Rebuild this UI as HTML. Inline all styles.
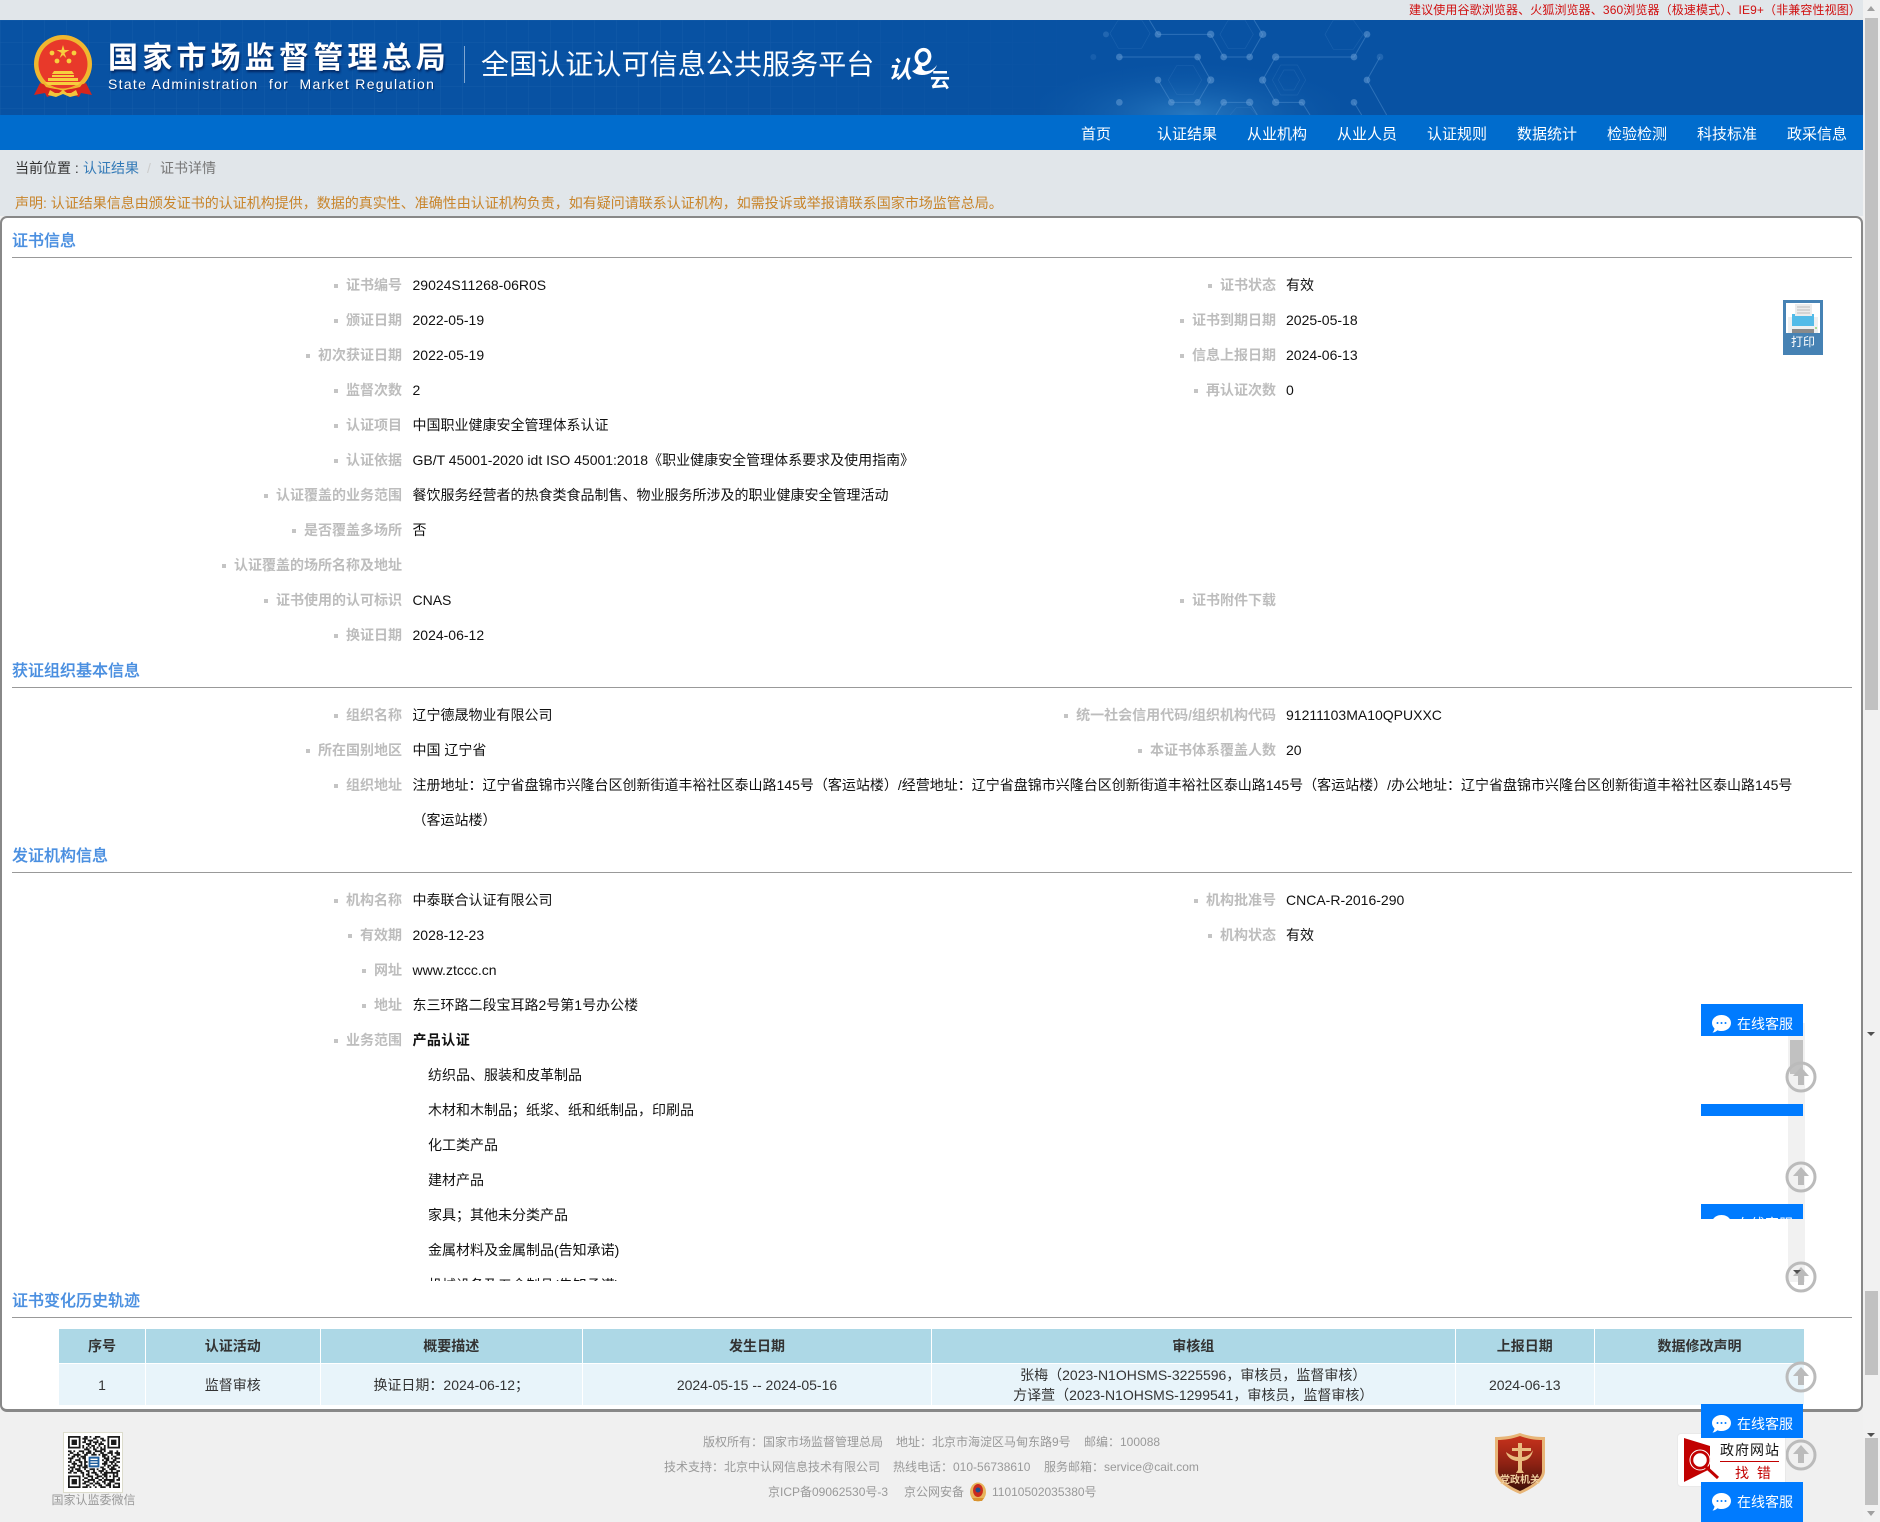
<!DOCTYPE html>
<html lang="zh-CN">
<head>
<meta charset="utf-8">
<title>证书详情</title>
<style>
html,body{margin:0;padding:0;width:1880px;height:1522px;overflow:hidden;background:#f0f0f0;font-family:"Liberation Sans","Noto Sans CJK SC",sans-serif;font-size:14px;color:#222}
div,span,svg{box-sizing:border-box}
.a{position:absolute;white-space:pre}
#top{position:absolute;left:0;top:0;width:1863px;height:216px;background:#e1e6ea}
#hd{position:absolute;left:0;top:20px;width:1863px;height:95px;background:#0852a3;overflow:hidden}
#nav{position:absolute;left:0;top:115px;width:1863px;height:35px;background:#006ccd}
.n{position:absolute;top:125px;line-height:20px;font-size:15px;color:#fff;white-space:pre}
#box{position:absolute;left:0;top:216px;width:1863px;height:1196px;background:#fff;border:2px solid #888;border-bottom-width:3px;border-radius:7px}
.t{position:absolute;left:12px;font-size:16px;line-height:22px;color:#4a8fe0;font-weight:500;-webkit-text-stroke:.2px #4a8fe0;white-space:pre}
.hr{position:absolute;left:12px;width:1840px;height:1px;background:#999}
#clip{position:absolute;left:0;top:0;width:1880px;height:1281px;overflow:hidden}
.r{position:absolute;height:20px;line-height:20px;white-space:pre}
.l{position:absolute;text-align:right;color:#bdbdbd;font-weight:bold;height:20px;line-height:20px;white-space:pre}
.l:before{content:"";display:inline-block;width:4px;height:4px;background:#c4c4c4;margin-right:8px;vertical-align:2px}
.v{position:absolute;color:#111;height:20px;line-height:20px;white-space:pre}
table{position:absolute;left:59px;top:1329px;width:1745px;height:75px;border-collapse:collapse;table-layout:fixed}
th{background:#add8e6;height:34px;border:1px solid #fff;border-top:0;font-size:14px;color:#333;padding:0;line-height:20px}
td{background:#e8f4fa;height:41px;border:1px solid #fff;border-bottom:0;text-align:center;color:#333;padding:0;line-height:20px;font-size:14px}
th:first-child,td:first-child{border-left:0}
th:last-child,td:last-child{border-right:0}
.sb{position:absolute;left:1863px;width:17px;background:#f1f1f1}
.th{position:absolute;left:1865px;width:13px;background:#c1c1c1}
.tr{position:absolute;width:0;height:0;border-left:4px solid transparent;border-right:4px solid transparent}
.btn{position:absolute;left:1701px;width:102px;background:#007bff;overflow:hidden}
.btn span{position:absolute;left:36px;color:#fff;font-size:14px;line-height:20px;white-space:pre}
.btn svg{position:absolute;left:11px}
.ci{position:absolute;width:32px;height:32px}
.f{position:absolute;font-size:12px;line-height:18px;color:#999;white-space:pre}
</style>
</head>
<body>
<div id="top"></div>
<div class="a" style="left:1409px;top:1px;font-size:12px;line-height:18px;color:#d01010;letter-spacing:.12px">建议使用谷歌浏览器、火狐浏览器、360浏览器（极速模式）、IE9+（非兼容性视图）</div>

<div id="hd">
<svg style="position:absolute;left:0;top:0" width="1863" height="95">
<defs>
<pattern id="g" width="22" height="22" patternUnits="userSpaceOnUse"><path d="M22 0H0V22" fill="none" stroke="#2a6cb5" stroke-width="1" opacity=".4"/></pattern>
<radialGradient id="gl" cx="50%" cy="100%" r="60%"><stop offset="0" stop-color="#2f82c8" stop-opacity=".8"/><stop offset="1" stop-color="#0852a3" stop-opacity="0"/></radialGradient>
<linearGradient id="fd" x1="0" x2="1"><stop offset="0" stop-color="#fff"/><stop offset=".62" stop-color="#fff"/><stop offset="1" stop-color="#000"/></linearGradient>
<mask id="m"><rect width="1125" height="95" fill="url(#fd)"/></mask>
</defs>
<rect width="1125" height="95" fill="url(#g)" mask="url(#m)"/>
<rect x="1040" y="0" width="300" height="95" fill="url(#gl)"/>
</svg>
<svg style="position:absolute;left:1060px;top:0" width="400" height="95" viewBox="0 0 1200 285">
<g fill="none" stroke="#5f9bd6" stroke-width="3" opacity=".42">
<path d="M294 43H452L491 111H569L608 43 582 0M178 111H413L452 180 413 247H334L294 180M647 111H882L921 43M647 111 608 180 647 247H726L750 285M491 247H569L592 285M491 247 468 285M960 111 921 180 980 285M268 0 294 43M882 247 905 285"/>
</g>
<g fill="none" stroke="#5f9bd6" stroke-width="2" opacity=".2">
<path d="M480 43 505 0H555L580 43 555 86H505ZM325 180 350 137H400L425 180 400 223H350ZM637 180 662 135H712L737 180 712 225H662ZM655 180 672 150H702L719 180 702 210H672ZM795 43 820 0H880L910 43 880 88H820ZM150 40 175 0H245L270 40 245 85H175ZM510 285 530 262H570L590 285"/>
</g>
<g fill="#6ea3d9" opacity=".5">
<circle cx="294" cy="43" r="10"/><circle cx="452" cy="43" r="11"/><circle cx="608" cy="43" r="11"/><circle cx="491" cy="111" r="10"/><circle cx="569" cy="111" r="10"/><circle cx="647" cy="111" r="11"/><circle cx="178" cy="111" r="10"/><circle cx="413" cy="111" r="10"/><circle cx="882" cy="111" r="10"/><circle cx="921" cy="43" r="10"/><circle cx="452" cy="180" r="11"/><circle cx="608" cy="180" r="11"/><circle cx="294" cy="180" r="10"/><circle cx="334" cy="247" r="10"/><circle cx="413" cy="247" r="10"/><circle cx="491" cy="247" r="10"/><circle cx="569" cy="247" r="11"/><circle cx="647" cy="247" r="11"/><circle cx="726" cy="247" r="10"/><circle cx="178" cy="247" r="10"/><circle cx="882" cy="247" r="10"/><circle cx="921" cy="180" r="10"/><circle cx="960" cy="111" r="10" opacity=".5"/>
<circle cx="138" cy="43" r="9" opacity=".5"/><circle cx="100" cy="111" r="9" opacity=".3"/>
</g>
</svg>
</div>
<div id="nav"></div>

<!-- emblem -->
<svg style="position:absolute;left:33px;top:35px" width="62" height="65" viewBox="0 0 62 65">
<circle cx="30" cy="29" r="29" fill="#f0b72f"/>
<circle cx="30" cy="29" r="24.5" fill="#e8392a"/>
<path d="M7 48 1 60 12 58 14 62 25 58H35L46 62 48 58 59 60 53 48 30 56Z" fill="#d5261e"/>
<path d="M10 48Q30 60 50 48L47 52Q30 57 13 52Z" fill="#f0b72f"/>
<path d="M17 55 22 58H26L30 55 34 58H38L43 55 45 60 37 62 30 59 23 62 15 60Z" fill="#f3c53b"/>
<path d="M30 10 31.5 15H36.500L31.500 18 33.300 23 30 20 26.700 23 28.500 18 23.500 15H28.500Z" fill="#f7cf3e"/>
<g fill="#f7cf3e"><circle cx="19" cy="18" r="2.400"/><circle cx="41" cy="18" r="2.400"/><circle cx="24" cy="26" r="2.400"/><circle cx="36" cy="26" r="2.400"/></g>
<path d="M21 36H39L41 39H19ZM19 40H41V42H19ZM15 43H45V46H15ZM12 47H48L45 50H15Z" fill="#f7cf3e"/>
</svg>

<div class="a" style="left:108px;top:38px;font-size:30px;line-height:42px;font-weight:bold;color:#fff;letter-spacing:4.2px;text-shadow:1px 2px 2px rgba(0,20,70,.7)">国家市场监督管理总局</div>
<div class="a" style="left:108px;top:75px;font-size:14px;line-height:18px;color:#fff;letter-spacing:1.3px;text-shadow:1px 1px 1px rgba(0,20,70,.6)">State Administration  for  Market Regulation</div>
<div class="a" style="left:464px;top:46px;width:1px;height:37px;background:#7fa6d2"></div>
<div class="a" style="left:481px;top:45px;font-size:28px;line-height:40px;color:#fff;letter-spacing:.1px">全国认证认可信息公共服务平台</div>

<!-- cloud logo -->
<div class="a" style="left:888px;top:56px;font-size:24px;line-height:30px;color:#fff;font-weight:bold;font-style:italic">认</div>
<svg style="position:absolute;left:908px;top:47px" width="32" height="30" viewBox="0 0 32 30"><ellipse cx="15" cy="10" rx="6.500" ry="7.500" fill="none" stroke="#fff" stroke-width="3.500" transform="rotate(20 15 10)"/><path d="M4 24Q9 23 11 16L14 17Q13 23 17 24 24 25 29 18 25 28 14 28 8 28 4 24Z" fill="#fff"/></svg>
<div class="a" style="left:930px;top:69px;font-size:20px;line-height:24px;color:#fff;font-weight:bold">云</div>

<div class="n" style="left:1081px">首页</div>
<div class="n" style="left:1157px">认证结果</div>
<div class="n" style="left:1247px">从业机构</div>
<div class="n" style="left:1337px">从业人员</div>
<div class="n" style="left:1427px">认证规则</div>
<div class="n" style="left:1517px">数据统计</div>
<div class="n" style="left:1607px">检验检测</div>
<div class="n" style="left:1697px">科技标准</div>
<div class="n" style="left:1787px">政采信息</div>

<div class="a" style="left:15px;top:158px;line-height:20px;color:#333">当前位置 :</div>
<div class="a" style="left:83px;top:158px;line-height:20px;color:#337ab7">认证结果</div>
<div class="a" style="left:147px;top:158px;line-height:20px;color:#ccc">/</div>
<div class="a" style="left:160px;top:158px;line-height:20px;color:#777">证书详情</div>
<div class="a" style="left:15px;top:193px;line-height:20px;color:#c8842a">声明: 认证结果信息由颁发证书的认证机构提供，数据的真实性、准确性由认证机构负责，如有疑问请联系认证机构，如需投诉或举报请联系国家市场监管总局。</div>

<div id="box"></div>

<div id="clip">
<div class="t" style="top:231px">证书信息</div><div class="hr" style="top:257px"></div>

<div class="l" style="left:0;width:402px;top:275px">证书编号</div><div class="v" style="left:412.500px;top:275px">29024S11268-06R0S</div>
<div class="l" style="left:800px;width:476px;top:275px">证书状态</div><div class="v" style="left:1286px;top:275px">有效</div>
<div class="l" style="left:0;width:402px;top:310px">颁证日期</div><div class="v" style="left:412.500px;top:310px">2022-05-19</div>
<div class="l" style="left:800px;width:476px;top:310px">证书到期日期</div><div class="v" style="left:1286px;top:310px">2025-05-18</div>
<div class="l" style="left:0;width:402px;top:345px">初次获证日期</div><div class="v" style="left:412.500px;top:345px">2022-05-19</div>
<div class="l" style="left:800px;width:476px;top:345px">信息上报日期</div><div class="v" style="left:1286px;top:345px">2024-06-13</div>
<div class="l" style="left:0;width:402px;top:380px">监督次数</div><div class="v" style="left:412.500px;top:380px">2</div>
<div class="l" style="left:800px;width:476px;top:380px">再认证次数</div><div class="v" style="left:1286px;top:380px">0</div>
<div class="l" style="left:0;width:402px;top:415px">认证项目</div><div class="v" style="left:412.500px;top:415px">中国职业健康安全管理体系认证</div>
<div class="l" style="left:0;width:402px;top:450px">认证依据</div><div class="v" style="left:412.500px;top:450px">GB/T 45001-2020 idt ISO 45001:2018《职业健康安全管理体系要求及使用指南》</div>
<div class="l" style="left:0;width:402px;top:485px">认证覆盖的业务范围</div><div class="v" style="left:412.500px;top:485px">餐饮服务经营者的热食类食品制售、物业服务所涉及的职业健康安全管理活动</div>
<div class="l" style="left:0;width:402px;top:520px">是否覆盖多场所</div><div class="v" style="left:412.500px;top:520px">否</div>
<div class="l" style="left:0;width:402px;top:555px">认证覆盖的场所名称及地址</div>
<div class="l" style="left:0;width:402px;top:590px">证书使用的认可标识</div><div class="v" style="left:412.500px;top:590px">CNAS</div>
<div class="l" style="left:800px;width:476px;top:590px">证书附件下载</div>
<div class="l" style="left:0;width:402px;top:625px">换证日期</div><div class="v" style="left:412.500px;top:625px">2024-06-12</div>

<div class="t" style="top:661px">获证组织基本信息</div><div class="hr" style="top:687px"></div>
<div class="l" style="left:0;width:402px;top:705px">组织名称</div><div class="v" style="left:412.500px;top:705px">辽宁德晟物业有限公司</div>
<div class="l" style="left:800px;width:476px;top:705px">统一社会信用代码/组织机构代码</div><div class="v" style="left:1286px;top:705px">91211103MA10QPUXXC</div>
<div class="l" style="left:0;width:402px;top:740px">所在国别地区</div><div class="v" style="left:412.500px;top:740px">中国 辽宁省</div>
<div class="l" style="left:800px;width:476px;top:740px">本证书体系覆盖人数</div><div class="v" style="left:1286px;top:740px">20</div>
<div class="l" style="left:0;width:402px;top:775px">组织地址</div><div class="v" style="left:412.500px;top:775px">注册地址：辽宁省盘锦市兴隆台区创新街道丰裕社区泰山路145号（客运站楼）/经营地址：辽宁省盘锦市兴隆台区创新街道丰裕社区泰山路145号（客运站楼）/办公地址：辽宁省盘锦市兴隆台区创新街道丰裕社区泰山路145号</div>
<div class="v" style="left:412.500px;top:810px">（客运站楼）</div>

<div class="t" style="top:846px">发证机构信息</div><div class="hr" style="top:872px"></div>
<div class="l" style="left:0;width:402px;top:890px">机构名称</div><div class="v" style="left:412.500px;top:890px">中泰联合认证有限公司</div>
<div class="l" style="left:800px;width:476px;top:890px">机构批准号</div><div class="v" style="left:1286px;top:890px">CNCA-R-2016-290</div>
<div class="l" style="left:0;width:402px;top:925px">有效期</div><div class="v" style="left:412.500px;top:925px">2028-12-23</div>
<div class="l" style="left:800px;width:476px;top:925px">机构状态</div><div class="v" style="left:1286px;top:925px">有效</div>
<div class="l" style="left:0;width:402px;top:960px">网址</div><div class="v" style="left:412.500px;top:960px">www.ztccc.cn</div>
<div class="l" style="left:0;width:402px;top:995px">地址</div><div class="v" style="left:412.500px;top:995px">东三环路二段宝耳路2号第1号办公楼</div>
<div class="l" style="left:0;width:402px;top:1030px">业务范围</div><div class="v" style="left:412.500px;top:1030px;font-weight:bold;letter-spacing:.4px">产品认证</div>
<div class="v" style="left:428px;top:1065px">纺织品、服装和皮革制品</div>
<div class="v" style="left:428px;top:1100px">木材和木制品；纸浆、纸和纸制品，印刷品</div>
<div class="v" style="left:428px;top:1135px">化工类产品</div>
<div class="v" style="left:428px;top:1170px">建材产品</div>
<div class="v" style="left:428px;top:1205px">家具；其他未分类产品</div>
<div class="v" style="left:428px;top:1240px">金属材料及金属制品(告知承诺)</div>
<div class="v" style="left:428px;top:1275px">机械设备及五金制品(告知承诺)</div>
</div>

<div class="t" style="top:1291px">证书变化历史轨迹</div><div class="hr" style="top:1317px"></div>

<table>
<colgroup><col style="width:86.500px"><col style="width:174.500px"><col style="width:262.500px"><col style="width:349px"><col style="width:523.500px"><col style="width:139.500px"><col style="width:209.500px"></colgroup>
<tr><th>序号</th><th>认证活动</th><th>概要描述</th><th>发生日期</th><th>审核组</th><th>上报日期</th><th>数据修改声明</th></tr>
<tr><td>1</td><td>监督审核</td><td>换证日期：2024-06-12；</td><td>2024-05-15 -- 2024-05-16</td><td>张梅（2023-N1OHSMS-3225596，审核员，监督审核）<br>方译萱（2023-N1OHSMS-1299541，审核员，监督审核）</td><td>2024-06-13</td><td></td></tr>
</table>

<!-- print -->
<div class="a" style="left:1783px;top:300px;width:40px;height:55px;background:#4682b4">
<svg style="position:absolute;left:3px;top:3px" width="34" height="30" viewBox="0 0 34 30"><rect width="34" height="30" fill="#fff"/><path d="M2 14H32V30H2Z" fill="#eef0f1"/><path d="M6 11H28V23H6Z" fill="#53bbe8"/><path d="M9 1H26V13H9Z" fill="#ececec"/><path d="M11 4H24M11 7H24M11 10H24" stroke="#bbb"/><path d="M6 26H28V30H6Z" fill="#8a8a8a"/><rect x="29" y="24" width="2" height="2" fill="#a5dc95"/></svg>
<div style="position:absolute;left:0;top:32px;width:40px;text-align:center;color:#fff;font-size:12px;line-height:20px">打印</div>
</div>

<!-- inner scrollbar -->
<div class="a" style="left:1788px;top:1023px;width:17px;height:259px;background:#f1f1f1"></div>
<div class="a" style="left:1790px;top:1040px;width:13px;height:34px;background:#c1c1c1"></div>

<!-- floating circles -->
<svg class="ci" style="left:1785px;top:1061px" viewBox="0 0 32 32"><circle cx="16" cy="16" r="14" fill="none" stroke="#bbb" stroke-width="3"/><path d="M16 6 24 15H19V24H13V15H8Z" fill="#bbb"/></svg>
<svg class="ci" style="left:1785px;top:1161px" viewBox="0 0 32 32"><circle cx="16" cy="16" r="14" fill="none" stroke="#bbb" stroke-width="3"/><path d="M16 6 24 15H19V24H13V15H8Z" fill="#bbb"/></svg>
<svg class="ci" style="left:1785px;top:1261px" viewBox="0 0 32 32"><circle cx="16" cy="16" r="14" fill="none" stroke="#bbb" stroke-width="3"/><path d="M16 6 24 15H19V24H13V15H8Z" fill="#bbb"/></svg>
<svg class="ci" style="left:1785px;top:1361px" viewBox="0 0 32 32"><circle cx="16" cy="16" r="14" fill="none" stroke="#bbb" stroke-width="3"/><path d="M16 6 24 15H19V24H13V15H8Z" fill="#bbb"/></svg>
<svg class="ci" style="left:1785px;top:1439px" viewBox="0 0 32 32"><circle cx="16" cy="16" r="14" fill="none" stroke="#bbb" stroke-width="3"/><path d="M16 6 24 15H19V24H13V15H8Z" fill="#bbb"/></svg>
<div class="tr" style="left:1793px;top:1270px;border-top:4px solid #505050"></div>

<!-- online service buttons -->
<div class="btn" style="top:1004px;height:32px"><svg style="top:11px" width="19" height="18" viewBox="0 0 19 18"><path d="M9.500 0C15 0 19 3.500 19 8S15 16 9.500 16C8 16 6.500 15.800 5.500 15.200 4 16.500 2.500 17.500 .5 17.500 1.800 16 2.300 15 2.500 13.500 1 12 0 10 0 8 0 3.500 4 0 9.500 0Z" fill="#fff"/><circle cx="5.500" cy="8" r="1" fill="#007bff"/><circle cx="9.500" cy="8" r="1" fill="#007bff"/><circle cx="13.500" cy="8" r="1" fill="#007bff"/></svg><span style="top:10px">在线客服</span></div>
<div class="btn" style="top:1104px;height:12px"></div>
<div class="btn" style="top:1204px;height:15px"><svg style="top:11px" width="19" height="18" viewBox="0 0 19 18"><path d="M9.500 0C15 0 19 3.500 19 8S15 16 9.500 16C4 16 0 12.500 0 8S4 0 9.500 0Z" fill="#fff"/></svg><span style="top:10px">在线客服</span></div>

<!-- footer -->
<div class="a" style="left:63px;top:1432px;width:60px;height:61px;background:#fff;border:1px solid #dcdccc">
<svg style="position:absolute;left:4px;top:3px" width="52" height="52" viewBox="0 0 29 29"><path fill="none" stroke="#1a1a1a" d="M0 .5h7M9 .5h2M12 .5h1M15 .5h3M22 .5h7M0 1.500h1M6 1.500h1M8 1.500h3M14 1.500h2M18 1.500h2M22 1.500h1M28 1.500h1M0 2.500h1M2 2.500h3M6 2.500h1M9 2.500h1M11 2.500h3M16 2.500h1M19 2.500h2M22 2.500h1M24 2.500h3M28 2.500h1M0 3.500h1M2 3.500h3M6 3.500h1M8 3.500h2M12 3.500h1M14 3.500h3M18 3.500h1M22 3.500h1M24 3.500h3M28 3.500h1M0 4.500h1M2 4.500h3M6 4.500h1M10 4.500h3M15 4.500h1M17 4.500h3M22 4.500h1M24 4.500h3M28 4.500h1M0 5.500h1M6 5.500h1M8 5.500h1M11 5.500h1M13 5.500h2M17 5.500h1M20 5.500h1M22 5.500h1M28 5.500h1M0 6.500h7M8 6.500h1M10 6.500h1M12 6.500h1M14 6.500h1M16 6.500h1M18 6.500h1M20 6.500h1M22 6.500h7M9 7.500h3M14 7.500h2M18 7.500h3M0 8.500h2M3 8.500h1M6 8.500h3M11 8.500h2M15 8.500h4M20 8.500h1M23 8.500h2M27 8.500h1M1 9.500h2M5 9.500h1M8 9.500h1M10 9.500h3M14 9.500h1M18 9.500h2M22 9.500h3M26 9.500h3M0 10.500h1M3 10.500h4M9 10.500h2M13 10.500h3M17 10.500h1M19 10.500h3M24 10.500h1M27 10.500h2M2 11.500h2M5 11.500h1M7 11.500h3M19 11.500h2M22 11.500h1M25 11.500h2M0 12.500h3M6 12.500h1M8 12.500h2M20 12.500h3M24 12.500h1M26 12.500h3M1 13.500h1M4 13.500h3M9 13.500h1M19 13.500h1M21 13.500h2M25 13.500h2M0 14.500h2M3 14.500h1M6 14.500h2M9 14.500h2M20 14.500h2M23 14.500h3M27 14.500h2M2 15.500h3M7 15.500h1M9 15.500h1M19 15.500h3M24 15.500h1M26 15.500h1M0 16.500h1M3 16.500h1M5 16.500h3M9 16.500h2M20 16.500h1M22 16.500h2M25 16.500h3M1 17.500h3M6 17.500h1M8 17.500h4M13 17.500h2M17 17.500h3M22 17.500h1M24 17.500h2M28 17.500h1M0 18.500h1M2 18.500h1M4 18.500h3M9 18.500h1M12 18.500h3M16 18.500h1M19 18.500h2M23 18.500h4M1 19.500h2M5 19.500h3M10 19.500h2M14 19.500h1M17 19.500h3M21 19.500h1M24 19.500h1M27 19.500h2M0 20.500h2M3 20.500h2M7 20.500h2M11 20.500h1M13 20.500h3M18 20.500h1M20 20.500h8M8 21.500h1M10 21.500h2M15 21.500h2M19 21.500h2M21 21.500h1M25 21.500h1M27 21.500h1M0 22.500h7M8 22.500h1M11 22.500h3M16 22.500h3M20 22.500h2M23 22.500h1M25 22.500h3M0 23.500h1M6 23.500h1M9 23.500h2M13 23.500h1M15 23.500h2M19 23.500h1M21 23.500h1M25 23.500h1M28 23.500h1M0 24.500h1M2 24.500h3M6 24.500h1M8 24.500h1M11 24.500h4M17 24.500h2M20 24.500h6M27 24.500h2M0 25.500h1M2 25.500h3M6 25.500h1M9 25.500h3M14 25.500h1M16 25.500h1M19 25.500h2M23 25.500h3M0 26.500h1M2 26.500h3M6 26.500h1M8 26.500h2M12 26.500h2M15 26.500h3M20 26.500h1M22 26.500h2M26 26.500h3M0 27.500h1M6 27.500h1M10 27.500h2M14 27.500h1M17 27.500h2M21 27.500h3M25 27.500h1M28 27.500h1M0 28.500h7M8 28.500h3M12 28.500h1M15 28.500h1M18 28.500h3M23 28.500h1M25 28.500h4"/><rect x="11" y="11" width="7" height="7" fill="#fff"/><rect x="11.500" y="11.500" width="6" height="6" fill="#1f5f9e"/><path d="M12.500 13h4M12.500 14.500h4M12.500 16h4" stroke="#fff" stroke-width=".7"/></svg>
</div>
<div class="f" style="left:51.500px;top:1491px">国家认监委微信</div>

<div class="f" style="left:703px;top:1433px">版权所有：国家市场监督管理总局</div>
<div class="f" style="left:896px;top:1433px">地址：北京市海淀区马甸东路9号</div>
<div class="f" style="left:1084px;top:1433px">邮编：100088</div>
<div class="f" style="left:664px;top:1458px">技术支持：北京中认网信息技术有限公司</div>
<div class="f" style="left:893px;top:1458px">热线电话：010-56738610</div>
<div class="f" style="left:1044px;top:1458px">服务邮箱：service@cait.com</div>
<div class="f" style="left:768px;top:1483px">京ICP备09062530号-3</div>
<div class="f" style="left:904px;top:1483px">京公网安备</div>
<div class="f" style="left:992px;top:1483px">11010502035380号</div>
<svg style="position:absolute;left:969px;top:1482px" width="18" height="20" viewBox="0 0 18 20"><ellipse cx="9" cy="10" rx="8" ry="9.500" fill="#e8b45c"/><ellipse cx="9" cy="8.500" rx="5" ry="6.500" fill="#c92b1f"/><circle cx="9" cy="8" r="2.500" fill="#1d4f8f"/><path d="M3 16H15L13 19H5Z" fill="#d9932e"/></svg>

<!-- party badge -->
<svg style="position:absolute;left:1494px;top:1433px" width="52" height="61" viewBox="0 0 52 61">
<defs><linearGradient id="sh" x1="0" x2="0" y1="0" y2="1"><stop offset="0" stop-color="#c8321c"/><stop offset=".5" stop-color="#8e2213"/><stop offset="1" stop-color="#3d0f08"/></linearGradient></defs>
<path d="M26 0 C34 3 43 4 51 4 V38 C51 48 38 56 26 61 14 56 1 48 1 38 V4 C9 4 18 3 26 0Z" fill="#e8b678"/>
<path d="M26 3 C34 6 42 7 48 7 V38 C48 46 37 53 26 58 15 53 4 46 4 38 V7 C10 7 18 6 26 3Z" fill="url(#sh)"/>
<path d="M24 10H28V15H37V18H28V24C33 24 37 21 39 17 38 24 33 28 28 28V37L30 40H22L24 37V28C18 28 13 24 12 19 16 22 20 24 24 24V18H18V15H24Z" fill="#eabc7f"/>
<text x="26" y="50" text-anchor="middle" font-size="10" font-weight="bold" fill="#f0d0a0" font-family="Liberation Sans,Noto Sans CJK SC,sans-serif">党政机关</text>
</svg>

<!-- gov error box -->
<div class="a" style="left:1677px;top:1433px;width:109px;height:54px;background:#fff;border:1px solid #e9e9e9;border-radius:4px"></div>
<svg style="position:absolute;left:1683px;top:1437px" width="40" height="46" viewBox="0 0 40 46"><path d="M1 1 27 9V32L1 45Z" fill="#c10000"/><circle cx="17" cy="23" r="8.500" fill="#fff" stroke="#c10000" stroke-width="3.500"/><circle cx="17" cy="23" r="10" fill="none" stroke="#fff" stroke-width="1"/><path d="M23 30 35 41" stroke="#c10000" stroke-width="3"/></svg>
<div class="a" style="left:1720px;top:1440px;font-size:14px;line-height:20px;color:#111;letter-spacing:1px">政府网站</div>
<div class="a" style="left:1720px;top:1461px;width:59px;height:1px;background:#c10000"></div>
<div class="a" style="left:1735px;top:1463px;font-size:14px;line-height:20px;color:#c10000;letter-spacing:2px">找 错</div>

<div class="btn" style="top:1404px;height:34px"><svg style="top:11px" width="19" height="18" viewBox="0 0 19 18"><path d="M9.500 0C15 0 19 3.500 19 8S15 16 9.500 16C8 16 6.500 15.800 5.500 15.200 4 16.500 2.500 17.500 .5 17.500 1.800 16 2.300 15 2.500 13.500 1 12 0 10 0 8 0 3.500 4 0 9.500 0Z" fill="#fff"/><circle cx="5.500" cy="8" r="1" fill="#007bff"/><circle cx="9.500" cy="8" r="1" fill="#007bff"/><circle cx="13.500" cy="8" r="1" fill="#007bff"/></svg><span style="top:10px">在线客服</span></div>
<div class="btn" style="top:1482px;height:40px"><svg style="top:11px" width="19" height="18" viewBox="0 0 19 18"><path d="M9.500 0C15 0 19 3.500 19 8S15 16 9.500 16C8 16 6.500 15.800 5.500 15.200 4 16.500 2.500 17.500 .5 17.500 1.800 16 2.300 15 2.500 13.500 1 12 0 10 0 8 0 3.500 4 0 9.500 0Z" fill="#fff"/><circle cx="5.500" cy="8" r="1" fill="#007bff"/><circle cx="9.500" cy="8" r="1" fill="#007bff"/><circle cx="13.500" cy="8" r="1" fill="#007bff"/></svg><span style="top:10px">在线客服</span></div>

<!-- page scrollbars -->
<div class="sb" style="top:0;height:1522px"></div>
<div class="tr" style="left:1867px;top:6px;border-bottom:5px solid #a0a0a0"></div>
<div class="th" style="top:18px;height:692px"></div>
<div class="tr" style="left:1867px;top:1032px;border-top:4px solid #505050"></div>
<div class="th" style="top:1291px;height:84px"></div>
<div class="tr" style="left:1867px;top:1433px;border-top:4px solid #505050"></div>
<div class="th" style="top:1438px;height:67px"></div>
<div class="tr" style="left:1867px;top:1511px;border-top:5px solid #a0a0a0"></div>
</body>
</html>
